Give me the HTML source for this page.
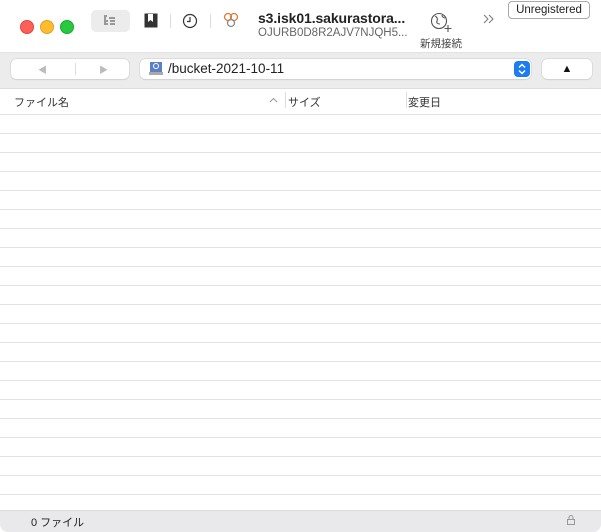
<!DOCTYPE html>
<html><head><meta charset="utf-8"><style>
body{margin:0;width:601px;height:531px;overflow:hidden;background:#fff;font-family:"Liberation Sans","Noto Sans CJK JP",sans-serif;position:relative}
.a{position:absolute}
.dot{width:12px;height:12px;border-radius:50%;top:20px}
.row{position:absolute;left:0;width:601px;height:1px;background:#e3e3e3}
</style></head><body>
<div class="a dot" style="left:20px;background:#fe5f57;border:0.5px solid #e0443e"></div>
<div class="a dot" style="left:40px;background:#febc2e;border:0.5px solid #dea123"></div>
<div class="a dot" style="left:60px;background:#28c840;border:0.5px solid #1aab29"></div>
<div class="a" style="left:91px;top:10px;width:39px;height:22px;background:#ececec;border-radius:5px"></div>
<svg class="a" style="left:103px;top:14px" width="14" height="14" viewBox="0 0 14 14" fill="none" stroke="#444" stroke-width="1"><path d="M1 2h3M6 4h6M3 7h2M7 7h5M3 10h2M7 10h5M2 3v8"/></svg>
<svg class="a" style="left:144px;top:13px" width="14" height="15" viewBox="0 0 14 15"><rect x="0.5" y="0.5" width="13" height="14" fill="#333"/><path d="M4 1v8l2.5-2 2.5 2V1z" fill="#fff"/></svg>
<div class="a" style="left:170px;top:14px;width:1px;height:14px;background:#ddd"></div>
<svg class="a" style="left:182px;top:13px" width="16" height="16" viewBox="0 0 16 16" fill="none" stroke="#333" stroke-width="1.2"><circle cx="8" cy="8" r="6.5"/><path d="M8 4v4.5H5"/></svg>
<div class="a" style="left:210px;top:14px;width:1px;height:14px;background:#ddd"></div>
<svg class="a" style="left:223px;top:12px" width="16" height="17" viewBox="0 0 16 17" fill="none" stroke="#e07a3a" stroke-width="1.3"><circle cx="5" cy="5" r="3.5"/><circle cx="11" cy="5" r="3.5"/><circle cx="8" cy="11" r="3.5" stroke="#888"/></svg>
<div class="a" style="left:258px;top:10px;font-size:14px;font-weight:bold;color:#222;letter-spacing:-0.1px">s3.isk01.sakurastora...</div>
<div class="a" style="left:258px;top:27px;font-size:11.5px;color:#666">OJURB0D8R2AJV7NJQH5...</div>
<svg class="a" style="left:430px;top:12px" width="24" height="20" viewBox="0 0 24 20" fill="none" stroke="#555" stroke-width="1.1"><circle cx="9" cy="9" r="7.5"/><path d="M5 4c2 1 3 3 2 5s1 3 3 3M12 3c0 2 2 3 3 3" /><path d="M18 13v7M14.5 16.5h7"/></svg>
<div class="a" style="left:420px;top:36px;font-size:10.5px;color:#444">新規接続</div>
<svg class="a" style="left:483px;top:14px" width="12" height="10" viewBox="0 0 12 10" fill="none" stroke="#777" stroke-width="1"><path d="M1 1l4 4-4 4M6 1l4 4-4 4"/></svg>
<div class="a" style="left:508px;top:1px;width:80px;height:16px;border:1px solid #aaa;border-radius:4px;font-size:11.5px;color:#222;text-align:center;line-height:16px">Unregistered</div>
<div class="a" style="left:0;top:52px;width:601px;height:36px;background:#ececec;border-top:1px solid #e2e2e2"></div>
<div class="a" style="left:11px;top:59px;width:118px;height:20px;background:#fff;border-radius:5px;box-shadow:0 0 0 0.5px #ccc,0 1px 1px rgba(0,0,0,.1)"></div>
<div class="a" style="left:75px;top:63px;width:1px;height:12px;background:#ddd"></div>
<div class="a" style="left:38px;top:63px;font-size:9px;color:#bbb">◀</div>
<div class="a" style="left:99px;top:63px;font-size:9px;color:#bbb">▶</div>
<div class="a" style="left:140px;top:59px;width:391px;height:20px;background:#fff;border-radius:5px;box-shadow:0 0 0 0.5px #ccc,0 1px 1px rgba(0,0,0,.1)"></div>
<svg class="a" style="left:149px;top:61px" width="14" height="15" viewBox="0 0 14 15"><rect x="1" y="1" width="12" height="10" fill="#5b7fc9"/><circle cx="7" cy="5" r="2.5" fill="none" stroke="#fff"/><rect x="0" y="11" width="14" height="3" fill="#aaa"/></svg>
<div class="a" style="left:168px;top:61px;font-size:13.5px;color:#222">/bucket-2021-10-11</div>
<svg class="a" style="left:514px;top:61px" width="16" height="16" viewBox="0 0 16 16"><rect width="16" height="16" rx="4" fill="#1d7cf2"/><path d="M5 6.5l3-3 3 3M5 9.5l3 3 3-3" fill="none" stroke="#fff" stroke-width="1.5"/></svg>
<div class="a" style="left:542px;top:59px;width:50px;height:20px;background:#fff;border-radius:5px;box-shadow:0 0 0 0.5px #ccc,0 1px 1px rgba(0,0,0,.1);text-align:center;font-size:11px;line-height:20px;color:#111">▲</div>
<div class="a" style="left:0;top:88px;width:601px;height:1px;background:#ddd"></div>
<div class="a" style="left:14px;top:94px;font-size:11px;color:#333">ファイル名</div>
<svg class="a" style="left:269px;top:97px" width="9" height="6" viewBox="0 0 9 6" fill="none" stroke="#999" stroke-width="1"><path d="M1 5l3.5-3.5L8 5"/></svg>
<div class="a" style="left:285px;top:92px;width:1px;height:16px;background:#ddd"></div>
<div class="a" style="left:288px;top:94px;font-size:11px;color:#333">サイズ</div>
<div class="a" style="left:406px;top:92px;width:1px;height:16px;background:#ddd"></div>
<div class="a" style="left:408px;top:94px;font-size:11px;color:#333">変更日</div>
<div class="row" style="top:114px"></div><div class="row" style="top:133px"></div><div class="row" style="top:152px"></div><div class="row" style="top:171px"></div><div class="row" style="top:190px"></div><div class="row" style="top:209px"></div><div class="row" style="top:228px"></div><div class="row" style="top:247px"></div><div class="row" style="top:266px"></div><div class="row" style="top:285px"></div><div class="row" style="top:304px"></div><div class="row" style="top:323px"></div><div class="row" style="top:342px"></div><div class="row" style="top:361px"></div><div class="row" style="top:380px"></div><div class="row" style="top:399px"></div><div class="row" style="top:418px"></div><div class="row" style="top:437px"></div><div class="row" style="top:456px"></div><div class="row" style="top:475px"></div><div class="row" style="top:494px"></div>
<div class="a" style="left:0;top:510px;width:601px;height:21px;background:#e9e9eb;border-top:1px solid #ddd;border-radius:0 0 8px 8px"></div>
<div class="a" style="left:31px;top:514px;font-size:11px;color:#222">0 ファイル</div>
<svg class="a" style="left:567px;top:515px" width="8" height="10" viewBox="0 0 8 10" fill="none" stroke="#999" stroke-width="1"><rect x="0.5" y="4.5" width="7" height="5"/><path d="M2 4.5V2.5a2 2 0 014 0v2"/></svg>
</body></html>
